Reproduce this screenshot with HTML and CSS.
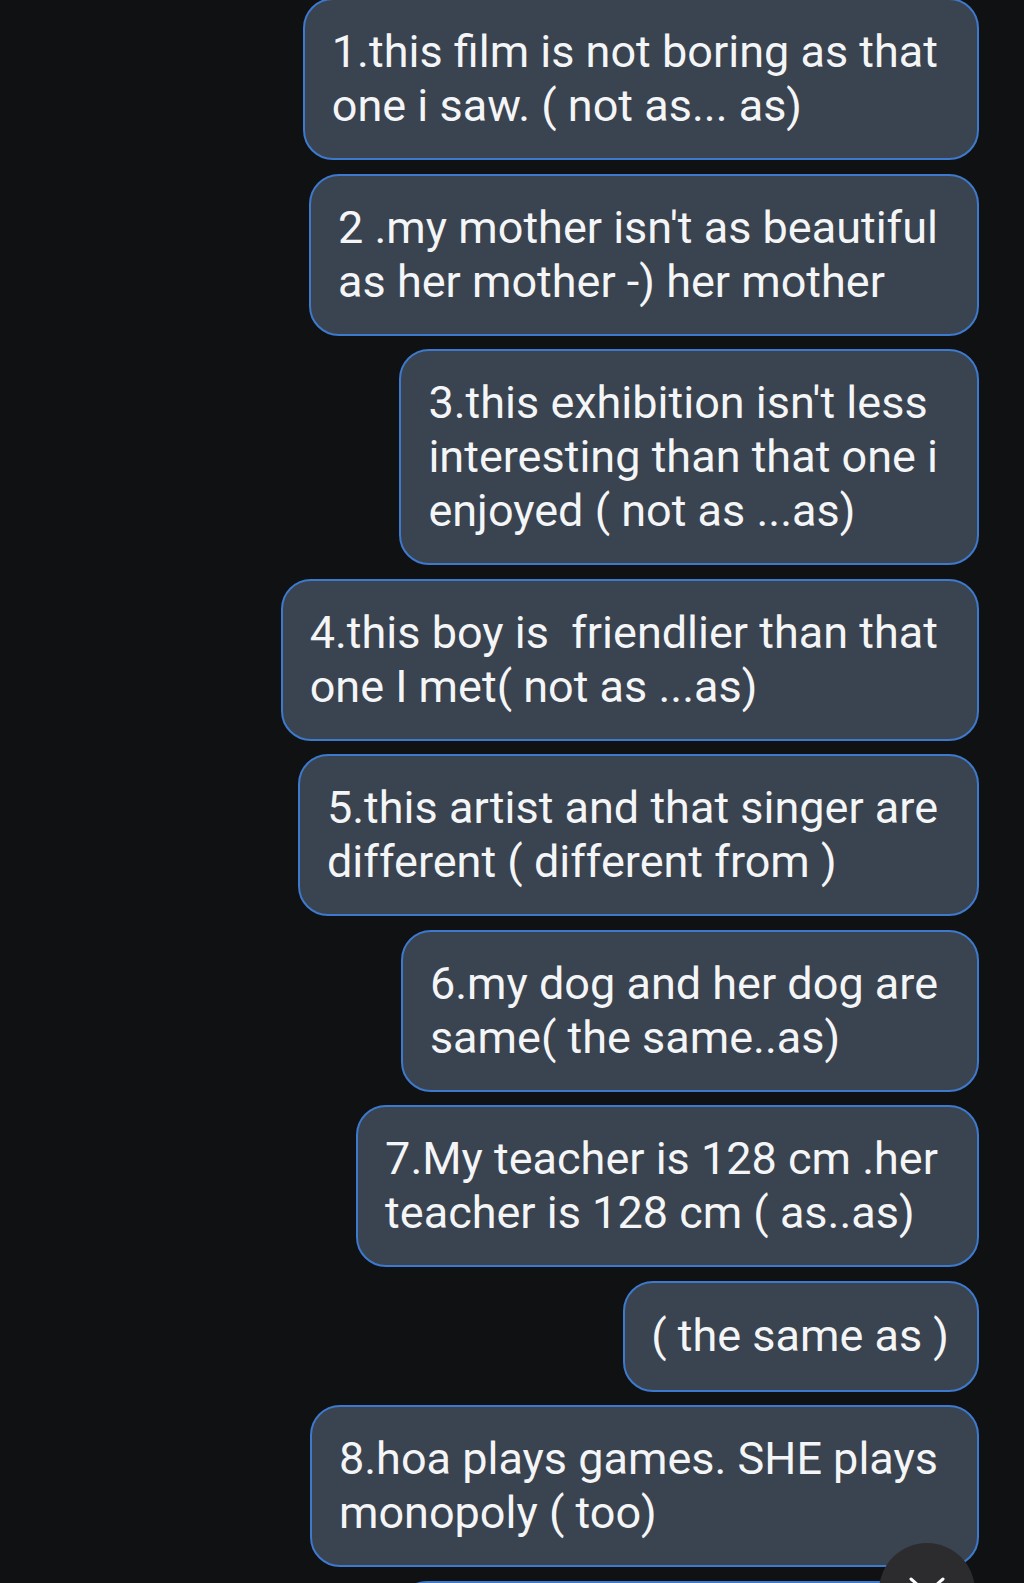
FILE: index.html
```html
<!DOCTYPE html>
<html lang="en">
<head>
<meta charset="utf-8">
<title>Chat</title>
<link rel="stylesheet" href="styles.css">
</head>
<body>
<main class="thread">
  <div class="bubble">1.this film is not boring as that<br>one i saw. ( not as... as)</div>
  <div class="bubble">2 .my mother isn't as beautiful<br>as her mother -) her mother</div>
  <div class="bubble">3.this exhibition isn't less<br>interesting than that one i<br>enjoyed ( not as ...as)</div>
  <div class="bubble">4.this boy is &nbsp;friendlier than that<br>one I met( not as ...as)</div>
  <div class="bubble">5.this artist and that singer are<br>different ( different from )</div>
  <div class="bubble">6.my dog and her dog are<br>same( the same..as)</div>
  <div class="bubble">7.My teacher is 128 cm .her<br>teacher is 128 cm ( as..as)</div>
  <div class="bubble bubble-single">( the same as )</div>
  <div class="bubble">8.hoa plays games. SHE plays<br>monopoly ( too)</div>
  <div class="bubble bubble-next" aria-hidden="true"></div>
</main>
<button class="scroll-down" aria-label="Scroll down">
  <svg width="40" height="20" viewBox="0 0 40 20"><path d="M4 3 L20 17 L36 3" fill="none" stroke="#ffffff" stroke-width="3" stroke-linecap="round" stroke-linejoin="round"/></svg>
</button>
</body>
</html>
```
FILE: styles.css
```css
html, body {
  margin: 0;
  padding: 0;
  background: #101113;
  height: 1583px;
  overflow: hidden;
}
body {
  position: relative;
  font-family: Roboto, "Noto Sans", sans-serif;
}
.thread {
  display: flex;
  flex-direction: column;
  align-items: flex-end;
  gap: 13.5px;
  padding-right: 45px;
  margin-top: -2px;
}
.bubble {
  background: #3a4350;
  border: 2px solid #3d7ace;
  border-radius: 30px;
  color: #f4f5f6;
  font-size: 45px;
  line-height: 54px;
  padding: 25px 39px 25px 27px;
  white-space: nowrap;
}
.bubble-single {
  padding: 26.5px 28px 26.5px 26px;
}
.bubble-next {
  width: 512px;
  height: 108px;
}
.scroll-down {
  position: absolute;
  left: 879px;
  top: 1543px;
  width: 96px;
  height: 96px;
  border-radius: 50%;
  background: #2c2c2e;
  border: none;
  padding: 0;
  display: flex;
  justify-content: center;
  align-items: flex-start;
  padding-top: 33px;
}
.scroll-down svg {
  display: block;
}
```
